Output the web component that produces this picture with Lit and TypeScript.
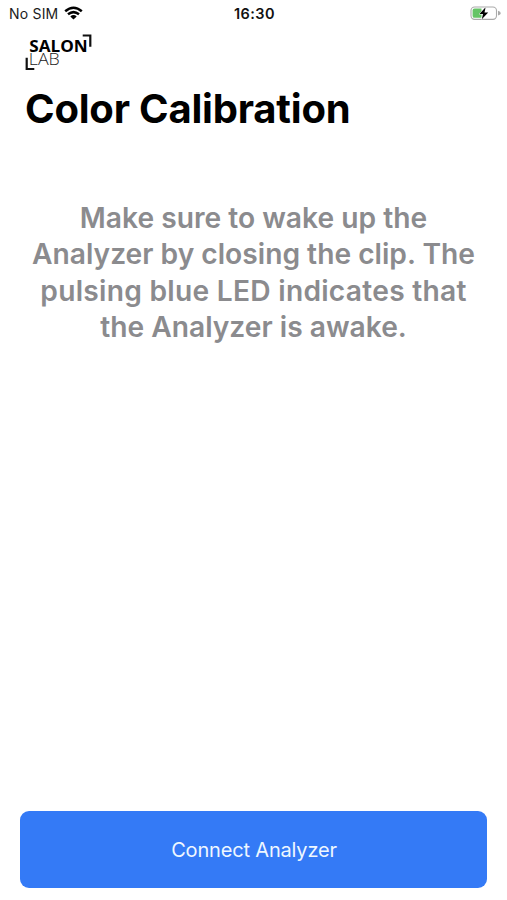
import { LitElement, html, css } from "lit";
import { customElement } from "lit/decorators.js";

@customElement("app-root")
export class AppRoot extends LitElement {
  static styles = css`
    :host { display: flex; flex-direction: column; height: 900px; background: #fff; font-family: Inter, "Liberation Sans", sans-serif; color: #000; overflow: hidden; }
    .status { display: grid; grid-template-columns: 1fr auto 1fr; align-items: center; height: 26px; padding: 0 6px 0 9px; box-sizing: border-box; }
    .carrier { display: flex; align-items: center; gap: 6px; font-size: 14px; letter-spacing: 0.2px; color: #1c1c1c; }
    .time { font-size: 14.5px; font-weight: 600; letter-spacing: 0.4px; margin-right: 1px; color: #111; }
    .battery { justify-self: end; }
    svg { display: block; }
    .logo { margin: 8px 0 0 25px; flex: none; }
    .salon { font: 700 16.8px "Open Sans", sans-serif; }
    .lab { font: 300 16.6px "Open Sans", sans-serif; fill: #222; }
    h1 { margin: 14px 0 0 25px; font-size: 40px; line-height: 48px; font-weight: 700; letter-spacing: -0.2px; white-space: nowrap; }
    .message { margin: 66.5px 0 0; text-align: center; color: #8b8b8e; font-size: 28.2px; line-height: 36.6px; font-weight: 580; }
    .line { display: block; white-space: nowrap; }
    .wide { letter-spacing: 0.26px; }
    .connect { margin: auto 20px 12.5px; height: 76.5px; padding: 1px 0 0 1px; border: 0; border-radius: 9px; background: #347af6; color: #eef7ff; font: 400 20px Inter, sans-serif; letter-spacing: -0.17px; }
  `;
  render() {
    return html`
      <div class="status">
        <div class="carrier"><span>No SIM</span>
          <svg width="19" height="14" viewBox="0 0 19 14" fill="none" stroke="#000" stroke-width="2.5"><path d="M1.2 5.2Q9.5-1.8 17.8 5.2M4 8.3Q9.5 3.9 15 8.3"/><path d="M6.3 10.4Q9.5 7.8 12.7 10.4L9.5 13.6Z" fill="#000" stroke="none"/></svg>
        </div>
        <div class="time">16:30</div>
        <svg class="battery" width="31" height="14" viewBox="0 0 31 14"><rect x="1" y="1" width="25.5" height="12.4" rx="3.6" fill="none" stroke="#aaa" stroke-width="1.1"/><path d="M28 4.8Q30.8 5.8 30.8 7.2T28 9.6Z" fill="#aaa"/><path d="M4.5 2.6H11.5V11.8H4.5Q2.6 11.8 2.6 9.9V4.5Q2.6 2.6 4.5 2.6Z" fill="#65c466"/><path d="M15.6 1.2L9.4 8H13L11.8 13.2L18.2 6.4H14.5Z" stroke="#fff" stroke-width="1" paint-order="stroke"/></svg>
      </div>
      <svg class="logo" width="68" height="37" viewBox="0 0 68 37">
        <path d="M57.7 1.5H65.3V12.7M1.7 23.7V35H9.3" fill="none" stroke="#111" stroke-width="2.2"/>
        <text class="salon" x="4.3" y="17.6" textLength="58.5" lengthAdjust="spacingAndGlyphs">SALON</text>
        <text class="lab" x="3.8" y="31.4" textLength="31" lengthAdjust="spacingAndGlyphs">LAB</text>
      </svg>
      <h1>Color Calibration</h1>
      <p class="message"><span class="line">Make sure to wake up the</span><span class="line">Analyzer by closing the clip. The</span><span class="line wide">pulsing blue LED indicates that</span><span class="line">the Analyzer is awake.</span></p>
      <button class="connect">Connect Analyzer</button>`;
  }
}
